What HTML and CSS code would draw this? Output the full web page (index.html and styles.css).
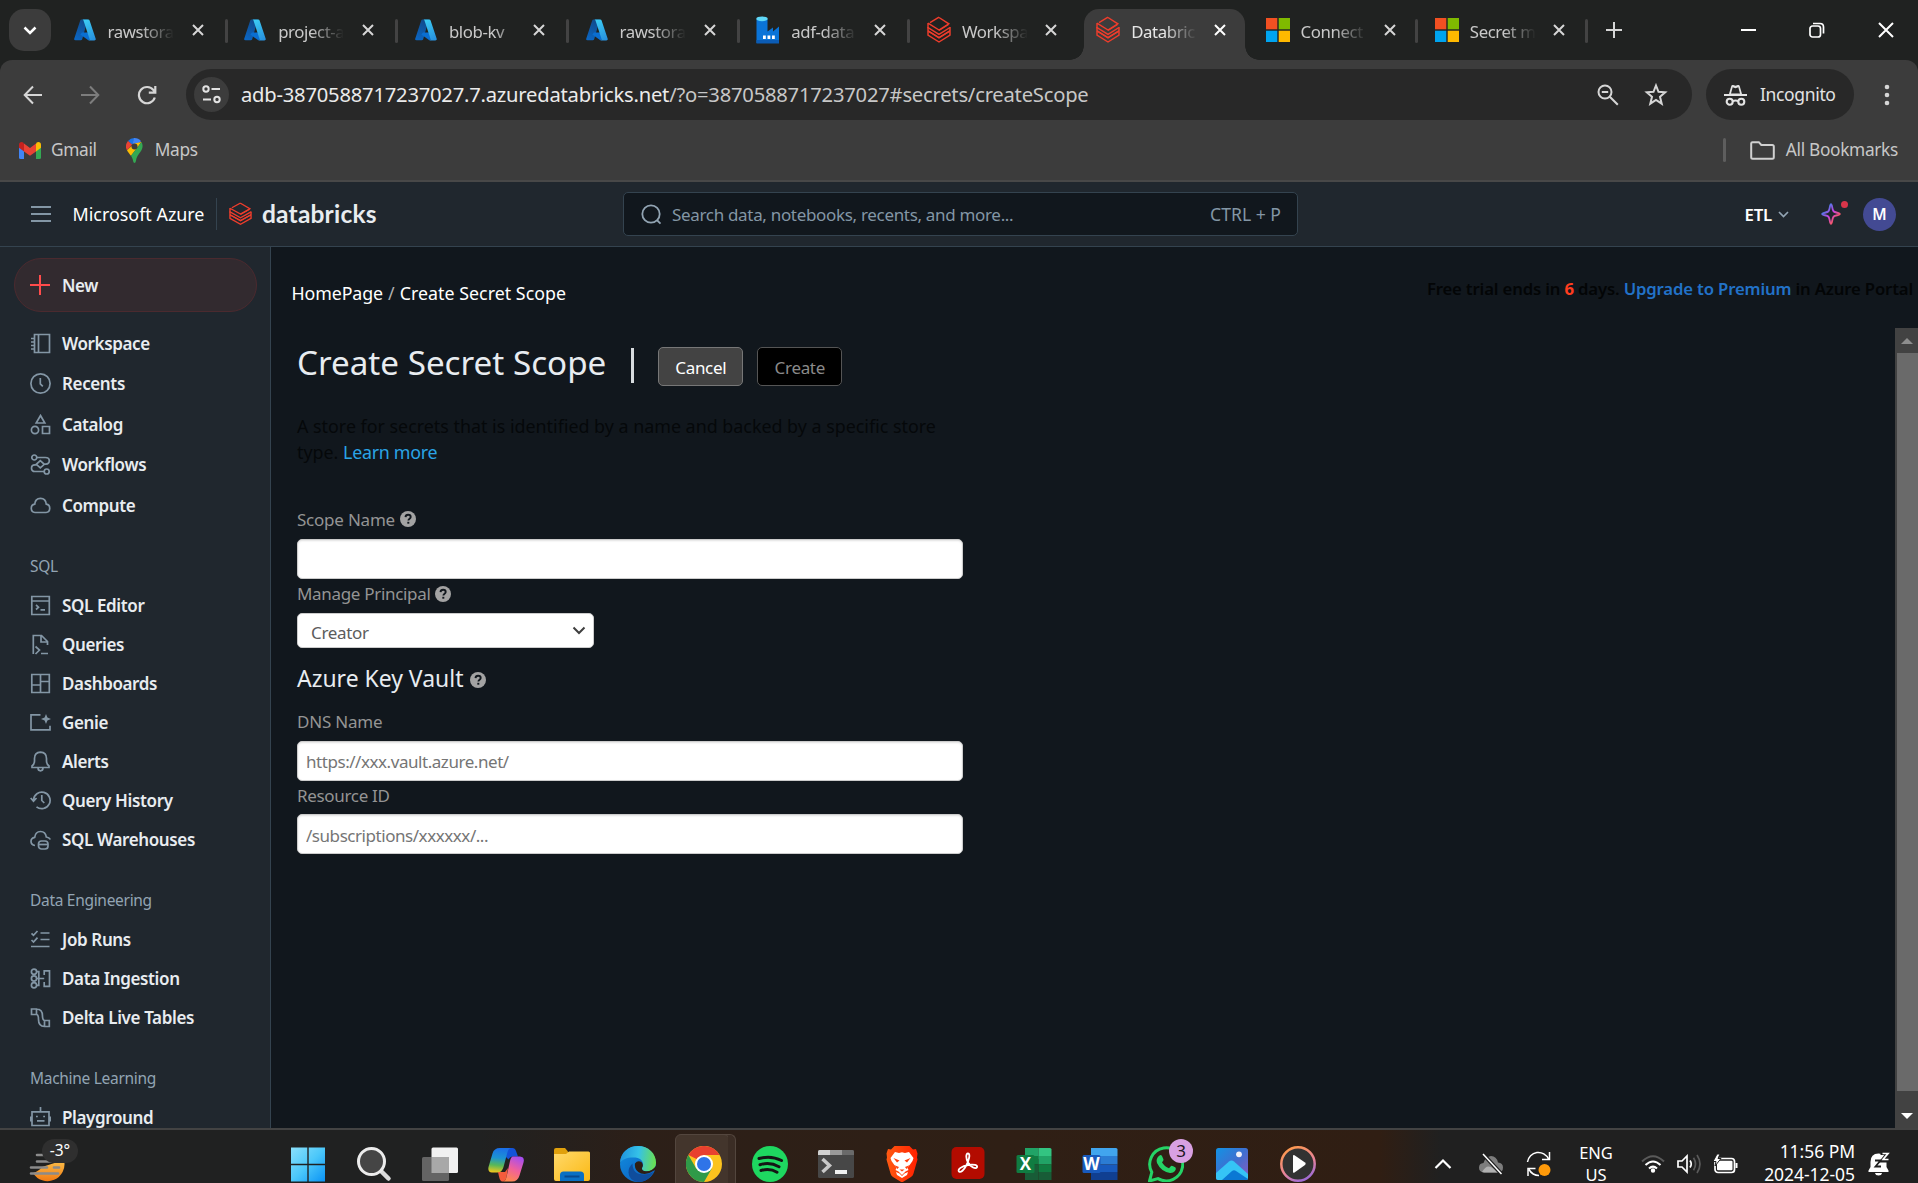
FILE: index.html
```html
<!DOCTYPE html>
<html lang="en">
<head>
<meta charset="utf-8">
<title>Databricks</title>
<link rel="stylesheet" href="styles.css">
</head>
<body>
<svg class="defs" aria-hidden="true">
  <defs>
    <linearGradient id="azL" x1="0.6" y1="0" x2="0.3" y2="1"><stop offset="0" stop-color="#114a8b"/><stop offset="1" stop-color="#0b66c2"/></linearGradient>
    <linearGradient id="azR" x1="0.3" y1="0" x2="0.7" y2="1"><stop offset="0" stop-color="#3ccbf4"/><stop offset="1" stop-color="#2892df"/></linearGradient>
    <linearGradient id="spark" x1="0" y1="0" x2="1" y2="1"><stop offset="0.2" stop-color="#4a7bea"/><stop offset="0.5" stop-color="#ca42e0"/><stop offset="0.85" stop-color="#ff5f46"/></linearGradient>
    <linearGradient id="win" x1="0" y1="0" x2="1" y2="1"><stop offset="0" stop-color="#8be0fb"/><stop offset="0.5" stop-color="#4cc8fa"/><stop offset="1" stop-color="#0a93f5"/></linearGradient>
    <linearGradient id="folderG" x1="0" y1="0" x2="1" y2="1"><stop offset="0" stop-color="#ffd96b"/><stop offset="1" stop-color="#fbb914"/></linearGradient>
    <linearGradient id="copA" x1="0.4" y1="0" x2="0.3" y2="1"><stop offset="0" stop-color="#1b6fe8"/><stop offset="0.4" stop-color="#1c93d2"/><stop offset="0.7" stop-color="#58b859"/><stop offset="1" stop-color="#f3c81c"/></linearGradient>
    <linearGradient id="copB" x1="0.7" y1="0" x2="0.3" y2="1"><stop offset="0" stop-color="#a64df0"/><stop offset="0.5" stop-color="#f0609c"/><stop offset="1" stop-color="#ff8a4a"/></linearGradient>
    <linearGradient id="edgeA" x1="0" y1="0.4" x2="1" y2="0.5"><stop offset="0" stop-color="#1f93dd"/><stop offset="0.5" stop-color="#35c1e8"/><stop offset="1" stop-color="#6be04f"/></linearGradient>
    <linearGradient id="edgeB" x1="0" y1="0" x2="0.8" y2="1"><stop offset="0" stop-color="#1390e0"/><stop offset="1" stop-color="#0a5fc0"/></linearGradient>
    <linearGradient id="photo" x1="0" y1="0" x2="1" y2="1"><stop offset="0" stop-color="#1293e4"/><stop offset="0.5" stop-color="#3f6fd0"/><stop offset="1" stop-color="#8a5ac0"/></linearGradient>
    <linearGradient id="ring" x1="0.2" y1="0" x2="0.7" y2="1"><stop offset="0" stop-color="#ff9a4a"/><stop offset="0.6" stop-color="#e8839a"/><stop offset="1" stop-color="#9a6ad8"/></linearGradient>
    <linearGradient id="sun" x1="0" y1="0" x2="0" y2="1"><stop offset="0" stop-color="#fbc14b"/><stop offset="1" stop-color="#f07a14"/></linearGradient>
    <linearGradient id="brave" x1="0" y1="0" x2="1" y2="0"><stop offset="0" stop-color="#ff5a12"/><stop offset="1" stop-color="#ff2000"/></linearGradient>
  </defs>
  <symbol id="azure" viewBox="0 0 22 22" preserveAspectRatio="none"><path d="M7.6.6h6.2L8.2 20.2a1.6 1.6 0 0 1-1.5 1.1H1.6A1.4 1.4 0 0 1 .3 19.4L6.2 1.6Q6.6.6 7.6.6Z" fill="url(#azL)"/><path d="M8 13.6h8l.7 6.4-2.4 1.3L6.3 15.5Z" fill="#0a6fd2"/><path d="M8.2.6h6a1.5 1.5 0 0 1 1.4 1l6 17.9a1.4 1.4 0 0 1-1.3 1.9h-6.2a1.4 1.4 0 0 0 1.300-1.900L9.500 1.600A1.500 1.500 0 0 0 8.200.6Z" fill="url(#azR)"/></symbol>
  <symbol id="bricks" viewBox="0 0 24 28" preserveAspectRatio="none"><g fill="none" stroke="#ee3d2c" stroke-width="1.45" stroke-linejoin="miter"><path d="M12 1.500 21.800 7.800 12 14 1 7.200M3 6.700 12 1.200M1 7v4.500L12 18.300l11-6.800"/><path d="M23 11v3.800L12 21.500 1 14.800M1 11v8L12 26l11-7v-4.500"/><path d="M12 14.500l9.500-6M1 14.800l11 7 11-7"/></g></symbol>
  <symbol id="ms" viewBox="0 0 24 24"><path fill="#f25022" d="M0 0h11.300v11.300H0z"/><path fill="#7fba00" d="M12.700 0H24v11.300H12.700z"/><path fill="#00a4ef" d="M0 12.700h11.300V24H0z"/><path fill="#ffb900" d="M12.700 12.700H24V24H12.700z"/></symbol>
  <symbol id="x" viewBox="0 0 12 12"><path d="M1 1l10 10M11 1 1 11" stroke="currentColor" stroke-width="2" fill="none"/></symbol>
  <symbol id="help" viewBox="0 0 16 16"><circle cx="8" cy="8" r="8" fill="#a3a3a3"/><path d="M5.500 6.100C5.600 4.500 6.700 3.700 8.100 3.700c1.500 0 2.600.9 2.600 2.200 0 1.800-2.300 1.700-2.300 3.600" fill="none" stroke="#11171d" stroke-width="1.900"/><path d="M7.300 10.800h2v1.900h-2z" fill="#11171d"/></symbol>
</svg>

<div class="screen">
  <!-- Tab strip -->
  <header class="tabstrip">
    <button class="tabsearch"><svg width="14" height="9" viewBox="0 0 14 9"><path d="M1.500 1.500 7 7l5.500-5.500" fill="none" stroke="#fff" stroke-width="2.500"/></svg></button>
    <div class="tab"><svg class="fav"><use href="#azure"/></svg><span class="tabtext">rawstora</span><svg class="tabx"><use href="#x"/></svg></div>
    <div class="tab"><svg class="fav"><use href="#azure"/></svg><span class="tabtext">project-a</span><svg class="tabx"><use href="#x"/></svg></div>
    <div class="tab"><svg class="fav"><use href="#azure"/></svg><span class="tabtext light">blob-kv</span><svg class="tabx"><use href="#x"/></svg></div>
    <div class="tab"><svg class="fav"><use href="#azure"/></svg><span class="tabtext">rawstora</span><svg class="tabx"><use href="#x"/></svg></div>
    <div class="tab"><svg class="fav tall" viewBox="0 0 24 28" preserveAspectRatio="none"><path d="M.5 3h11v12.500l5.500-4v4l6-5V27H.5z" fill="#0a74d8"/><path d="M.5 24h22.500v3.500H.5z" fill="#0b5cb5"/><ellipse cx="6" cy="2.800" rx="5.700" ry="2.400" fill="#5fd8f8"/><path d="M7 19.500h2.800V23H7zm4.500 0h2.800V23h-2.800zm4.500 0h2.800V23H16z" fill="#fff"/></svg><span class="tabtext">adf-data</span><svg class="tabx"><use href="#x"/></svg></div>
    <div class="tab narrow last"><svg class="fav tall"><use href="#bricks"/></svg><span class="tabtext">Workspa</span><svg class="tabx"><use href="#x"/></svg></div>
    <div class="tab narrow last active"><svg class="fav tall"><use href="#bricks"/></svg><span class="tabtext">Databric</span><svg class="tabx"><use href="#x"/></svg></div>
    <div class="tab narrow"><svg class="fav tall"><use href="#ms"/></svg><span class="tabtext">Connect</span><svg class="tabx"><use href="#x"/></svg></div>
    <div class="tab narrow"><svg class="fav tall"><use href="#ms"/></svg><span class="tabtext">Secret m</span><svg class="tabx"><use href="#x"/></svg></div>
    <svg class="newtab" viewBox="0 0 16 16"><path d="M8 0v16M0 8h16" stroke="#d6d6d6" stroke-width="2"/></svg>
    <div class="winctl">
      <svg width="15" height="16" viewBox="0 0 15 16"><path d="M0 8h15" stroke="#fff" stroke-width="2"/></svg>
      <svg width="16" height="16" viewBox="0 0 16 16" fill="none" stroke="#fff" stroke-width="1.700"><rect x="1" y="4" width="10.500" height="11" rx="2.500"/><path d="M4 1.500h7q3.500 0 3.500 3.500v6.500"/></svg>
      <svg width="16" height="16" viewBox="0 0 16 16"><path d="M1 1l14 14M15 1 1 15" stroke="#fff" stroke-width="2"/></svg>
    </div>
  </header>

  <!-- Address bar and bookmarks -->
  <section class="toolbar">
    <div class="navrow">
      <div class="navbtns">
        <svg width="20" height="20" viewBox="0 0 20 20" fill="none" stroke="#d6d6d6" stroke-width="2"><path d="M19 10H2M10 1.500 1.700 10l8.300 8.500"/></svg>
        <svg width="20" height="20" viewBox="0 0 20 20" fill="none" stroke="#7d7d7d" stroke-width="2"><path d="M1 10h17M10 1.500l8.300 8.500-8.300 8.500"/></svg>
        <svg width="20" height="20" viewBox="0 0 20 20" fill="none" stroke="#d6d6d6" stroke-width="2.200"><path d="M17.800 12.500A8.100 8.100 0 1 1 16.500 5.200L18 7M18.300 1v6.600h-6.500"/></svg>
      </div>
      <div class="omnibox">
        <span class="siteinfo"><svg width="19" height="19" viewBox="0 0 19 19" fill="none" stroke="#e3e3e3" stroke-width="2"><circle cx="4" cy="4" r="2.700"/><path d="M9.500 4H18M1 14.500h8"/><circle cx="15" cy="14.500" r="2.700"/></svg></span>
        <span class="url">adb-3870588717237027.7.azuredatabricks.net<span class="urlpath">/?o=3870588717237027#secrets/createScope</span></span>
        <svg width="22" height="22" viewBox="0 0 22 22" fill="none" stroke="#d6d6d6" stroke-width="2"><circle cx="8" cy="8" r="6.500"/><path d="M4.800 8h6.400M12.800 12.800l8 8"/></svg>
        <svg class="star" width="24" height="24" viewBox="0 0 24 24" fill="none" stroke="#d6d6d6" stroke-width="2"><path d="M12 2.500l2.500 6.300 6.700.5-5.200 4.500 1.700 6.900-5.700-3.800-5.700 3.800 1.700-6.900-5.200-4.500 6.700-.5z"/></svg>
      </div>
      <div class="incog"><svg width="23" height="22" viewBox="0 0 23 22"><path d="M5 10 7.300 2Q7.700.5 9.200 1L11.500 1.700 13.800 1q1.500-.5 1.900 1L18 10h5v2H0v-2zM8.700 3.300 7 9.500h9L14.300 3.300l-2.800 1z" fill="#e3e3e3"/><g fill="none" stroke="#e3e3e3" stroke-width="2.100"><circle cx="5.700" cy="17.700" r="3"/><circle cx="17.300" cy="17.700" r="3"/><path d="M8.700 17.300q2.800-1.500 5.600 0"/></g></svg><span>Incognito</span></div>
      <svg class="dots" viewBox="0 0 6 22" fill="#d6d6d6"><circle cx="3" cy="3" r="2.300"/><circle cx="3" cy="11" r="2.300"/><circle cx="3" cy="19" r="2.300"/></svg>
    </div>
    <div class="bookmarks">
      <svg width="22" height="17" viewBox="0 0 22 17"><path d="M0 3v12.500A1.500 1.500 0 0 0 1.500 17H5V5z" fill="#4285f4"/><path d="M22 3v12.500a1.500 1.500 0 0 1-1.500 1.500H17V5z" fill="#34a853"/><path d="M17 2v7.500l5-3.800V2.500C22 .2 19.500-.700 17.700.6z" fill="#fbbc04"/><path d="M0 2.500v3.200l5 3.800V2L4.300.6C2.500-.7 0 .2 0 2.500z" fill="#c5221f"/><path d="M5 1.600v7.900l6 4.300 6-4.300V1.600L11 6z" fill="#ea4335"/></svg>
      <span class="bm">Gmail</span>
      <svg class="pin" width="17" height="25" viewBox="0 0 17 25"><path d="M8.500 0A8.400 8.400 0 0 0 2 3l4.300 3.700z" fill="#1a73e8"/><path d="M2 3A8.400 8.400 0 0 0 1 12.300L6.300 6.700z" fill="#ea4335"/><path d="M8.500 0C11 0 13.500 1.200 15 3.200L8.500 8.500 6.300 6.700 8 0z" fill="#4285f4"/><path d="M1 12.300c1 2 2.600 3.700 4 5.500L15.500 4 8.500 5.500z" fill="#fbbc04"/><path d="M15.500 4c2 3.500 1 7-1 9.700-2.400 3-4 5.300-4.600 9.300-.4 2.500-2.400 2.500-2.800 0C6.800 21 6 19.300 5 17.800z" fill="#34a853"/><circle cx="8.500" cy="8.500" r="3" fill="#3c3c3c"/></svg>
      <span class="bm">Maps</span>
      <span class="bmsep"></span>
      <svg width="25" height="19" viewBox="0 0 25 19" fill="none" stroke="#d0d0d0" stroke-width="2"><path d="M1.200 2.500q0-1.300 1.300-1.300h6.300l2.500 2.800h11q1.500 0 1.500 1.500v10.800q0 1.500-1.500 1.500H2.700q-1.500 0-1.500-1.500z"/></svg>
      <span class="bm all">All Bookmarks</span>
    </div>
  </section>

  <!-- Databricks header -->
  <header class="dbhead">
    <svg class="burger" width="20" height="16" viewBox="0 0 20 16"><path d="M0 1h20M0 8h20M0 15h20" stroke="#8396a5" stroke-width="1.800"/></svg>
    <span class="msaz">Microsoft Azure</span>
    <svg class="dblogo"><use href="#bricks"/></svg>
    <span class="dbname">databricks</span>
    <div class="search"><svg width="21" height="21" viewBox="0 0 21 21" fill="none" stroke="#92a4b3" stroke-width="1.800"><circle cx="10" cy="10" r="8.700"/><path d="M15.800 16l3.700 3.700"/></svg><span class="ph">Search data, notebooks, recents, and more...</span><span class="kbd">CTRL + P</span></div>
    <div class="hright">
      <span class="etl">ETL</span>
      <svg width="11" height="7" viewBox="0 0 11 7"><path d="M1 1l4.500 4.500L10 1" fill="none" stroke="#92a4b3" stroke-width="1.700"/></svg>
      <span class="sparkle"><svg width="20" height="22" viewBox="0 0 20 20" preserveAspectRatio="none"><path d="M10 1.200c1.300 0 1 4.800 2.500 6.300s6.300 1.200 6.300 2.500-4.800 1-6.300 2.500-1.200 6.300-2.500 6.300-1-4.800-2.500-6.300S1.200 11.300 1.200 10s4.800-1 6.300-2.500S8.700 1.200 10 1.200z" fill="none" stroke="url(#spark)" stroke-width="1.800"/></svg><i class="reddot"></i></span>
      <span class="avatar">M</span>
    </div>
  </header>

  <div class="app">
    <nav class="side">
      <a class="new"><svg width="20" height="20" viewBox="0 0 20 20"><path d="M10 0v20M0 10h20" stroke="#ff4b4b" stroke-width="2"/></svg>New</a>
      <ul class="group main">
        <li><svg viewBox="0 0 21 21"><path d="M4.500 1.500h15v18h-15zM8.500 1.500v18M1 5.500h3.500M1 9h3.500M1 12.500h3.500M1 16h3.500"/></svg>Workspace</li>
        <li><svg viewBox="0 0 21 21"><circle cx="10.500" cy="10.500" r="9.600"/><path d="M10.300 5v5.800l2.500 2.500"/></svg>Recents</li>
        <li><svg viewBox="0 0 21 21"><path d="M10.500 1.500 14.800 9H6.200zM12.500 12.500h7v7h-7z"/><circle cx="5" cy="16" r="3.600"/></svg>Catalog</li>
        <li><svg viewBox="0 0 21 21"><circle cx="4.300" cy="3.500" r="2.500"/><circle cx="16.700" cy="17.500" r="2.500"/><path d="M6.800 3.500h8.500q4 0 4 3.300t-3.500 3.300h-1.500M14.200 17.500H5q-3.500 0-3.500-3.300t3.500-3.300h1.500M10.300 6.700l4 3.600-4 3.600-4-3.600z"/></svg>Workflows</li>
        <li><svg viewBox="0 0 21 21"><path d="M5 17.500a4.200 4.200 0 0 1-.3-8.300C5 5.700 7.300 3.300 10.500 3.300s5.500 2.400 5.800 5.900a4.200 4.200 0 0 1-.3 8.300z"/></svg>Compute</li>
      </ul>
      <ul class="group">
        <li class="label">SQL</li>
        <li><svg viewBox="0 0 21 21"><path d="M1.800 1.500h17.500v18H1.800zM1.800 6h17.500M6 10l2.500 2.200L6 14.500M10.500 14.800h4.500"/></svg>SQL Editor</li>
        <li><svg viewBox="0 0 21 21"><path d="M3.300 20V1.500h8.200l6 6V11M11 1.500V8h6.500M5.500 12.500l4 3.500-4 4M11 19.500h7"/></svg>Queries</li>
        <li><svg viewBox="0 0 21 21"><path d="M1.800 1.500h17.500v18H1.800zM10.500 1.500v18M1.800 12h8.700M10.500 8.500h8.800"/></svg>Dashboards</li>
        <li><svg viewBox="0 0 21 21"><path d="M10.500 2.800H1v15h19v-4"/><path class="fill" d="M16 2l1.400 3.600L21 7l-3.600 1.400L16 12l-1.400-3.600L11 7l3.600-1.400z"/></svg>Genie</li>
        <li><svg viewBox="0 0 21 21"><path d="M4.500 10V7.500q0-6 6-6.300 6 .3 6 6.300V10q0 3 2.500 5v1.500H2V15q2.500-2 2.500-5zM8 16.800q0 3 2.500 3t2.500-3"/></svg>Alerts</li>
        <li><svg viewBox="0 0 21 21"><path d="M3.500 10A8.300 8.300 0 1 1 6.500 16.800M.7 8l2.800 3.300L6.500 8M11.800 5v5.500l2.500 2.500"/></svg>Query History</li>
        <li><svg viewBox="0 0 21 21"><path d="M5 16.500q-4-.5-4-4.200Q1 9 4.700 8.300q.8-5.800 5.800-5.800T16.300 8q3 .3 4 2.500"/><rect x="8.500" y="12" width="9.500" height="8" rx="3"/><path d="M8.500 15.500h9.500"/></svg>SQL Warehouses</li>
      </ul>
      <ul class="group">
        <li class="label">Data Engineering</li>
        <li><svg viewBox="0 0 21 21"><path d="M10.500 4h9M10.500 10.500h9M1 17.500h18.500M1.500 4.300l2 2L7.500 2M1.500 11l2 2 4-4.300"/></svg>Job Runs</li>
        <li><svg viewBox="0 0 21 21"><circle cx="4" cy="3.700" r="2.600"/><circle cx="4" cy="10.500" r="2.600"/><circle cx="4" cy="17.300" r="2.600"/><path d="M6.500 3.700h2.300v13.600H6.500M6.700 10.500h7.500M14.200 7V2.800h5.300v15.500h-5.300V14"/></svg>Data Ingestion</li>
        <li><svg viewBox="0 0 21 21"><path d="M1.500 2h5v5.500h-5zM6.500 2q6 0 6 7 0 4.500 2.500 4.500M6.500 7.500q2 0 2 5 0 7 6 7M14.500 13.500h4.800v6h-4.800z"/></svg>Delta Live Tables</li>
      </ul>
      <ul class="group">
        <li class="label">Machine Learning</li>
        <li><svg viewBox="0 0 21 21"><path d="M2 4.800h17v13.700H2zM10.500 0v4.800M.5 9.500v5M20.500 9.500v5M7 13.800h7.500M6 9.500h1.800M13.200 9.500H15"/></svg>Playground</li>
      </ul>
    </nav>

    <main class="content">
      <div class="topline">
        <div class="crumbs"><a>HomePage</a><span class="slash">/</span><a>Create Secret Scope</a></div>
        <div class="trial">Free trial ends in <b>6</b> days. <a>Upgrade to Premium</a> in Azure Portal</div>
      </div>
      <div class="scroll">
        <div class="form">
          <div class="titlerow"><h1>Create Secret Scope</h1><i class="vbar"></i><button class="btn cancel">Cancel</button><button class="btn create" disabled>Create</button></div>
          <p class="desc">A store for secrets that is identified by a name and backed by a specific store type. <a>Learn more</a></p>
          <label class="l1">Scope Name<svg class="help"><use href="#help"/></svg></label>
          <input type="text">
          <label class="l2">Manage Principal<svg class="help"><use href="#help"/></svg></label>
          <div class="select">Creator<svg width="14" height="9" viewBox="0 0 14 9"><path d="M1.500 1.500 7 7l5.500-5.500" fill="none" stroke="#3f3f3f" stroke-width="2"/></svg></div>
          <h2>Azure Key Vault<svg class="help"><use href="#help"/></svg></h2>
          <label class="l3">DNS Name</label>
          <input type="text" placeholder="https://xxx.vault.azure.net/">
          <label class="l4">Resource ID</label>
          <input type="text" class="res" placeholder="/subscriptions/xxxxxx/...">
        </div>
        <div class="sbar"><span class="sbtn"><svg width="12" height="6"><path d="M6 0l6 6H0z" fill="#8d8d8d"/></svg></span><span class="thumb"></span><span class="sbtn down"><svg width="12" height="6"><path d="M0 0h12L6 6z" fill="#fff"/></svg></span></div>
      </div>
    </main>
  </div>

  <!-- Windows taskbar -->
  <footer class="taskbar">
    <div class="weather"><svg width="36" height="30" viewBox="0 0 36 30"><path d="M35 8a17 17 0 0 1-31 13q6-2 9-6z" fill="url(#sun)"/><path d="M8 3h10M8 9.500h14M2 15.500h16M25 15.500h5M2 21.500h27" stroke="#8b8b8b" stroke-width="2.600" stroke-linecap="round"/></svg><span class="temp">-3°</span></div>
    <div class="apps">
      <div><svg viewBox="0 0 36 36"><path d="M1 1.500h16.300v16.300H1zM18.700 1.500H35v16.300H18.700zM1 19.200h16.300v16.300H1zM18.700 19.200H35v16.300H18.700z" fill="url(#win)"/></svg></div>
      <div><svg viewBox="0 0 36 36"><path d="M24 24l8.500 8.500" stroke="#dcdcdc" stroke-width="4.500" stroke-linecap="round"/><circle cx="15.500" cy="15.500" r="13" fill="#454545" stroke="#ececec" stroke-width="3"/></svg></div>
      <div><svg viewBox="0 0 36 36"><rect x="9.500" y="1.500" width="26.500" height="25.500" rx="1.500" fill="#f1f1f1"/><rect y="11" width="27" height="24" rx="1.500" fill="#646464"/><path d="M9.500 11H27v16H9.500z" fill="#a8a8a8"/></svg></div>
      <div><svg viewBox="0 0 36 36"><path d="M19 2h5.500q2.500 0 3.500 3l2 5.500h-5q-3 0-4.500 3L17 10z" fill="#1453d8"/><path d="M12 2h11q-2.500.5-3.500 4l-4 15q-1.500 5.500-6 5.500H4Q-.500 26.500.5 21L4.500 7.500Q6 2 12 2z" fill="url(#copA)"/><path d="M10 26h7l3-4-1.500 9q-1 4.500-4 4.500-2.500 0-3.500-5z" fill="#f45c3c"/><path d="M25 10.500h7q5 .5 3.500 6l-4 13q-1.700 6-7.500 6H14.500q3 0 4-4.500l3.500-16q1-4.500 3-4.500z" fill="url(#copB)"/></svg></div>
      <div><svg viewBox="0 0 36 36"><path d="M0 4q0-2 2-2h9l3 3.500V9H0z" fill="#e0a00c"/><path d="M0 8h12l3-2.500h19.500Q36 5.500 36 7v26q0 2-2 2H2q-2 0-2-2z" fill="url(#folderG)"/><path d="M6 35v-6q0-3.500 3.500-3.500h17Q30 25.500 30 29v6z" fill="#0a70c4"/><path d="M10.500 30.500h15" stroke="#08498e" stroke-width="2"/></svg></div>
      <div><svg viewBox="0 0 36 36"><circle cx="18" cy="18" r="18" fill="url(#edgeB)"/><path d="M0 17C.5 6 8.500 0 18 0c10.500 0 18 7.500 18 16.500 0 6-4.500 8.800-9 8.800-4 0-6-1.600-5-3.300 3-4.500-.5-10-6.500-10.500C8 11 2 13 0 17z" fill="url(#edgeA)"/><path d="M12.500 17.500q0 11 11 11 6 0 10-2.500Q28 36 18 36q-9-1.500-9.500-9.500 0-5.500 4-9z" fill="#0f4d9c"/><path d="M15 17.500q-1 7 6 10 7 1.500 12-2.500l3.500-1.500L36 20q-4 5.500-10 5.300-4.500-.3-4-3.300 2-3-.5-6-4-2-6.500 1.500z" fill="#2e1e14"/></svg></div>
      <div class="cur"><svg viewBox="0 0 36 36"><circle cx="18" cy="18" r="18" fill="#fcc31e"/><path d="M2.400 9A18 18 0 0 1 33.600 9H18L10.500 13z" fill="#e8402f"/><path d="M2.400 9A18 18 0 0 0 18 36l7.800-13.500L18 26l-7.800-3.500z" fill="#2f9a48"/><circle cx="18" cy="18" r="9" fill="#fff"/><circle cx="18" cy="18" r="7" fill="#2f74e8"/></svg></div>
      <div><svg viewBox="0 0 36 36"><circle cx="18" cy="18" r="18" fill="#1ed760"/><path d="M7 12.500q12-3.500 22.500 2M8 18.700q10-3 19 2M9 24.500q9-2.500 16 1.700" fill="none" stroke="#151515" stroke-width="3" stroke-linecap="round"/></svg></div>
      <div><svg viewBox="0 0 36 36"><rect y="4" width="36" height="28" rx="1.500" fill="#474747"/><path d="M0 9V5.500Q0 4 1.500 4H12v5z" fill="#d0d0d0"/><path d="M12 4h12v5H12z" fill="#9a9a9a"/><path d="M24 4h10.500Q36 4 36 5.500V9H24z" fill="#6a6a6a"/><path d="M4.500 13l7 6.500-7 6.500" fill="none" stroke="#c8c8c8" stroke-width="3.500"/><path d="M17 24h12v4H17z" fill="#f0f0f0"/></svg></div>
      <div><svg viewBox="0 0 36 36"><path d="M10.500 0h15L29 3.500l3-.5 1.500 4.500-.5 4 .5 2-4 14q-.5 2-2.500 3.500L18 36.500 9 31q-2-1.500-2.500-3.500l-4-14 .5-2-.5-4L4 3l3 .5z" fill="url(#brave)"/><path d="M11 6l4 1 3-.7 3 .7 4-1 4.500 6-1 3-5 7 1 2-3 1.500-3.500 3.500-3.500-3.500-3-1.500 1-2-5-7-1-3z" fill="#fff"/><path d="M9.500 12l6 2.500-2.500 2zM26.500 12l-6 2.500 2.500 2zM10 19l5 2-1.500 2zM26 19l-5 2 1.500 2zM15.500 23.500h5L18 25.500z" fill="#ff4010"/><path d="M12 26l3.500 1.500L18 30l2.500-2.500L24 26l-1 3-5 3-5-3z" fill="#fff"/></svg></div>
      <div><svg viewBox="0 0 36 36"><rect x="1.500" y="1" width="33" height="32" rx="5" fill="#b30b00"/><path d="M9 25.500c-2-2 3-5.500 9-6.500 6-1.200 10 .3 9 2.300-1.500 2.500-7-1-9-4.800-2-3.500-2.500-9 0-9 3 0 .5 8-2 12.500-2 3.700-5.200 7-7 5.500z" fill="none" stroke="#fff" stroke-width="1.800"/></svg></div>
      <div><svg viewBox="0 0 36 36"><path d="M9 2h13.500v11H9z" fill="#21a366"/><path d="M22.500 2H34q1.500 0 1.500 1.500V10h-13z" fill="#33c481"/><path d="M9 10h13.500v8.500H9z" fill="#107c41"/><path d="M22.500 10h13v8.500h-13z" fill="#21a366"/><path d="M9 18.500h13.500V34H9z" fill="#185c37"/><path d="M22.500 18.500h13v7.500h-13z" fill="#107c41"/><path d="M22.500 26h13v8h-13z" fill="#185c37"/><rect x=".5" y="9" width="18" height="18" rx="1.500" fill="#107c41"/><text x="9.500" y="23.500" class="glyph">X</text></svg></div>
      <div><svg viewBox="0 0 36 36"><path d="M9 2h25q1.500 0 1.500 1.500V10H9z" fill="#41a5ee"/><path d="M9 10h26.500v8.500H9z" fill="#2b7cd3"/><path d="M9 18.500h26.500V26H9z" fill="#185abd"/><path d="M9 26h26.500v8H9z" fill="#103f91"/><rect x=".5" y="9" width="18" height="18" rx="1.500" fill="#185abd"/><text x="9.500" y="23.500" class="glyph">W</text></svg></div>
      <div class="wa"><svg viewBox="0 0 36 36"><path d="M1.500 35l2.300-8.700A16.500 16.500 0 1 1 10 32.600z" fill="none" stroke="#25d366" stroke-width="3"/><path d="M11.500 9.500q1.500-1 2.500.5l1.500 3.500q.2 1-1.500 2.800 2.500 4.500 7 6l2-2.300q1-.7 4.500 1.500 1 1-.5 3.500-2 2.300-5 2-9-1.500-13-10-1.500-4.500 2.500-7.500z" fill="#25d366"/></svg><span class="badge">3</span></div>
      <div><svg viewBox="0 0 36 36"><rect x="2" y="2" width="32" height="32" rx="2.500" fill="url(#photo)"/><path d="M2 27l13-11.500q2.500-2 5 0L34 28v4q0 2-2 2H4q-2 0-2-2z" fill="#35c4f6"/><path d="M8 34l10-9q2-1.700 4 0l12 8q-.5 1-2 1z" fill="#0a78d4"/><circle cx="25" cy="8.300" r="2.900" fill="#f0f0f8"/></svg></div>
      <div><svg viewBox="0 0 36 36"><circle cx="18" cy="18" r="16.700" fill="#323232" stroke="url(#ring)" stroke-width="2.500"/><path d="M13 10q0-1.500 1.500-.8L25 16.500q1.500 1.300 0 2.600L14.500 26.500Q13 27.300 13 26z" fill="#fff"/></svg></div>
    </div>
    <div class="tray">
      <span class="slot"><svg width="18" height="12" viewBox="0 0 18 12"><path d="M1.500 10 9 2.500l7.500 7.500" fill="none" stroke="#fff" stroke-width="2.200"/></svg></span>
      <span class="slot"><svg width="26" height="22" viewBox="0 0 26 22"><path d="M6 19.500q-5-.5-5-4.800T5.500 10Q7.500 3.500 13 3q5.500 0 7 6.500 5 .5 5 5t-4.500 5z" fill="#7d7d7d"/><path d="M4 19q4-7.500 9-5l9 5.500H6z" fill="#b0b0b0"/><path d="M5 1l18.500 20" stroke="#202020" stroke-width="4"/><path d="M5 1l18.500 20" stroke="#fff" stroke-width="1.500"/></svg></span>
      <span class="slot"><svg width="26" height="26" viewBox="0 0 26 26"><g fill="none" stroke="#fff" stroke-width="1.500"><path d="M1.500 11a11 11 0 0 1 21-3M23.500 1v7.500H16M2 25v-7.500h7.500M3 18.500q3.500 6 10 6"/></g><circle cx="18.500" cy="19" r="6" fill="#ff9a0a"/></svg></span>
      <span class="lang">ENG<br>US</span>
      <span class="status">
        <svg width="24" height="18" viewBox="0 0 24 18" fill="none" stroke="#fff" stroke-width="2"><path d="M1 6.500q11-10.500 22 0" stroke="#5a5a5a"/><path d="M4.500 10q7.500-7 15 0M8 13.500q4-3.700 8 0"/><circle cx="12" cy="15.500" r="1.200" fill="#fff"/></svg>
        <svg width="25" height="20" viewBox="0 0 25 20" fill="none" stroke="#fff" stroke-width="1.700"><path d="M1 7h4l5-5v16l-5-5H1zM13 6.500q2.500 3.500 0 7"/><path d="M16.500 3.800q4 6.200 0 12.400M20 1q6 9 0 18" stroke="#5a5a5a"/></svg>
        <svg width="25" height="20" viewBox="0 0 25 20"><rect x="2" y="4.500" width="19.500" height="14" rx="3" fill="none" stroke="#fff" stroke-width="1.700"/><rect x="4" y="6.700" width="15.500" height="9.600" rx="1" fill="#fff"/><path d="M22.500 9h2v5h-2z" fill="#fff"/><path d="M4 0 0 7.500h3L2 12l6-7.500H5L7 0z" fill="#fff" stroke="#202020" stroke-width="1"/></svg>
      </span>
      <span class="clock">11:56 PM<br>2024-12-05</span>
      <svg class="bell" width="22" height="24" viewBox="0 0 22 24"><path d="M2.500 10q0-8.500 8-8.500t8 8.500v5l2 3.500v1.500H.5v-1.500L2.500 15z" fill="#fff"/><path d="M7 21h7q-.5 2.500-3.500 2.500T7 21z" fill="#fff"/><path d="M12.500 1h8l-6 7.500h7.500" fill="none" stroke="#202020" stroke-width="4"/><path d="M14.500 1.500h5.500l-5 6h5.500" fill="none" stroke="#fff" stroke-width="1.700"/><path d="M7 8.500h5.500l-5 6h5.500" fill="none" stroke="#202020" stroke-width="1.800"/></svg>
    </div>
  </footer>
</div>
</body>
</html>
```
FILE: styles.css
```css
* { box-sizing: border-box; }
body { margin: 0; background: #202221; font-family: "Noto Sans", sans-serif; font-size: 17px; color: #e8ecf0; }
svg { display: block; flex: none; }
.defs { position: absolute; width: 0; height: 0; }
ul { list-style: none; margin: 0; padding: 0; }
button, input { font-family: inherit; }
.screen { width: 1918px; height: 1183px; overflow: hidden; display: flex; flex-direction: column; }

/* Tab strip */
.tabstrip { height: 60px; flex: none; display: flex; align-items: center; padding-left: 9px; background: #202221; }
.tabsearch { width: 42px; height: 42px; margin-right: 6px; padding: 0; border: 0; border-radius: 15px; background: #3c3c3c; display: flex; align-items: center; justify-content: center; }
.tab { position: relative; width: 170.7px; height: 60px; flex: none; display: flex; align-items: center; padding-left: 16.5px; color: #c9c9c9; }
.tab.narrow { width: 169.3px; }
.tab::after { content: ""; position: absolute; right: 0; top: 19px; width: 3px; height: 24px; border-radius: 2px; background: #434343; }
.tab.last::after { display: none; }
.fav { width: 22px; height: 22px; margin-right: 12px; }
.fav.tall { width: 24px; height: 28px; margin-right: 11px; }
.tabtext { width: 66px; margin-right: 18px; padding-top: 2px; font-size: 16.8px; letter-spacing: -0.4px; white-space: nowrap; overflow: hidden; -webkit-mask-image: linear-gradient(90deg, #000 50%, transparent 100%); mask-image: linear-gradient(90deg, #000 50%, transparent 100%); }
.tall + .tabtext { margin-right: 17px; }
.tabtext.light { -webkit-mask-image: linear-gradient(90deg, #000 70%, transparent 105%); mask-image: linear-gradient(90deg, #000 70%, transparent 105%); }
.tabx { width: 12px; height: 12px; color: #d6d6d6; }
.tab > * { z-index: 1; }
.tab.active { color: #e6e6e6; }
.tab.active .tabx { color: #fff; }
.tab.active::before { content: ""; position: absolute; left: 4px; top: 9px; bottom: 0; width: 161px; border-radius: 15px 15px 0 0; background: #3c3c3c; }
.tab.active::after { display: block; left: -10px; right: auto; top: 46px; width: 189px; height: 14px; border-radius: 0; background: radial-gradient(circle 14px at 0 0, transparent 13.5px, #3c3c3c 14px) 0 0 / 14px 14px no-repeat, radial-gradient(circle 14px at 100% 0, transparent 13.5px, #3c3c3c 14px) 100% 0 / 14px 14px no-repeat; }
.newtab { width: 16px; height: 16px; margin-left: 18px; }
.winctl { margin-left: auto; padding-right: 24.5px; display: flex; gap: 53px; }

/* Toolbar */
.toolbar { height: 122px; flex: none; background: #3c3c3c; border-bottom: 2px solid #484848; border-radius: 12px 12px 0 0; padding-top: 9px; }
.navrow { height: 51px; display: flex; align-items: center; }
.navbtns { width: 186px; display: flex; gap: 37px; padding-left: 23px; }
.omnibox { width: 1506px; height: 51px; border-radius: 26px; background: #282828; display: flex; align-items: center; padding: 0 24px 0 8px; }
.siteinfo { width: 35px; height: 35px; border-radius: 50%; background: #3c3c3c; display: flex; align-items: center; justify-content: center; margin-right: 12px; }
.url { flex: 1; padding-bottom: 2px; font-size: 20.2px; letter-spacing: -0.22px; color: #ebebeb; white-space: nowrap; }
.urlpath { color: #c7c7c7; }
.star { margin-left: 25px; }
.incog { width: 148px; height: 51px; margin-left: 14px; padding-left: 18px; border-radius: 26px; background: #282828; display: flex; align-items: center; gap: 13px; font-size: 17.5px; letter-spacing: -0.35px; color: #e3e3e3; }
.incog span { padding-bottom: 1px; }
.dots { width: 6px; height: 22px; margin-left: 30px; }
.bookmarks { height: 60px; display: flex; align-items: center; padding-left: 19px; color: #c7c7c7; }
.bm { font-size: 17.3px; letter-spacing: -0.32px; margin-left: 10px; padding-bottom: 2px; white-space: nowrap; }
.pin { margin-left: 29px; margin-right: 2px; }
.bmsep { width: 3px; height: 24px; margin-left: auto; margin-right: 24px; border-radius: 2px; background: #5e5e5e; }
.bm.all { margin-left: 11px; margin-right: 20px; }

/* Databricks header */
.dbhead { height: 65px; flex: none; display: flex; align-items: center; background: #20272e; border-bottom: 1px solid #34434f; }
.burger { margin-left: 31px; }
.msaz { margin-left: 21.5px; width: 144.5px; height: 32px; line-height: 33px; border-right: 1px solid #34434f; font-size: 17.9px; color: #fff; white-space: nowrap; }
.dblogo { width: 23px; height: 24px; margin-left: 12px; }
.dbname { width: 114px; margin-left: 10px; font-family: Lato, sans-serif; font-size: 24.5px; font-weight: 700; letter-spacing: 0.2px; line-height: 26px; }
.search { width: 675px; height: 44px; margin-left: 247px; border: 1px solid #34434f; border-radius: 5px; background: #11171d; display: flex; align-items: center; padding: 0 16px 0 17px; color: #8396a5; }
.ph { margin-left: 10px; flex: 1; font-size: 17px; letter-spacing: -0.32px; }
.kbd { font-size: 17.6px; }
.hright { margin-left: auto; padding-right: 22px; display: flex; align-items: center; }
.etl { font-weight: 600; font-size: 16.8px; letter-spacing: -0.2px; color: #fff; margin-right: 6px; }
.sparkle { position: relative; margin-left: 32px; margin-right: 22px; }
.reddot { position: absolute; right: -7px; top: -2px; width: 7px; height: 7px; border-radius: 50%; background: #d8354a; }
.avatar { width: 33px; height: 33px; border-radius: 50%; background: #434a93; color: #fff; font-weight: 600; font-size: 15.5px; line-height: 33px; text-align: center; }

/* Sidebar */
.app { height: 881px; flex: none; display: flex; background: #11171d; }
.side { width: 271px; overflow: hidden; background: #20272e; border-right: 1px solid #34434f; padding-top: 11px; font-weight: 600; font-size: 17px; letter-spacing: -0.37px; }
.new { height: 54px; width: 243px; margin: 0 0 11px 14px; padding-left: 15px; border: 1px solid #4b2a2f; border-radius: 27px; background: #322a2f; display: flex; align-items: center; gap: 12px; }
.group { margin-bottom: 21px; }
.group li { height: 39px; padding-left: 30px; display: flex; align-items: center; gap: 11px; white-space: nowrap; }
.group.main { margin-bottom: 20px; }
.group.main li { height: 40.5px; }
.group svg { width: 21px; height: 21px; fill: none; stroke: #8396a5; stroke-width: 1.7; }
.group svg .fill { fill: #8396a5; stroke: none; }
.group li.label { height: 40px; font-weight: 400; font-size: 15.5px; letter-spacing: -0.3px; color: #92a4b3; }

/* Content */
.content { flex: 1; display: flex; flex-direction: column; }
.topline { height: 81px; flex: none; display: flex; justify-content: space-between; padding: 30px 5px 0 20.5px; white-space: nowrap; }
.crumbs { line-height: 32px; font-size: 17.8px; color: #fff; }
.crumbs .slash { color: #b0b0b0; margin: 0 5px; }
.crumbs a:first-child { letter-spacing: -0.1px; }
.crumbs a:last-child { letter-spacing: 0.04px; }
.trial { line-height: 24px; font-size: 16.7px; letter-spacing: -0.15px; font-weight: 600; color: #030506; }
.trial b { color: #ff3d1f; font-weight: 700; }
.trial a { color: #2272c8; }
.scroll { flex: 1; display: flex; justify-content: space-between; }
.form { width: 692px; padding: 19px 0 0 26px; color: #949494; letter-spacing: -0.32px; }
.titlerow { height: 39px; display: flex; align-items: center; }
h1 { margin: 0; font-weight: 400; font-size: 33.2px; letter-spacing: 0; color: #e8ecf0; line-height: 30px; padding-bottom: 7px; white-space: nowrap; }
.vbar { width: 3px; height: 35px; margin-left: 25px; margin-right: 24px; background: #d8dcdf; margin-bottom: 2px; }
.btn { width: 85px; height: 39px; border-radius: 5px; border: 1px solid #777; font-size: 17px; letter-spacing: -0.32px; padding: 3px 0 0; line-height: 30px; color: #fff; background: #434343; }
.btn.create { margin-left: 14px; background: #000; border-color: #555; color: #8a8a8a; }
.desc { margin: 27px 0 0; width: 662px; line-height: 26px; font-size: 17.86px; letter-spacing: 0; color: #05080a; }
.desc a { color: #2aa4e6; letter-spacing: -0.28px; }
label { display: flex; align-items: center; font-size: 17px; }
.help { width: 16px; height: 16px; margin-left: 5px; }
.l1 { height: 26px; margin: 41px 0 7px; letter-spacing: -0.22px; }
.l2 { height: 29px; margin-bottom: 5px; }
.l3 { height: 26px; margin-bottom: 7px; letter-spacing: -0.2px; }
.l4 { height: 28px; margin-bottom: 5px; }
.form input { display: block; width: 666px; height: 40px; border: 1px solid #ccc; border-radius: 5px; background: #fff; padding: 0 8px 0; font-size: 17px; letter-spacing: -0.45px; color: #333; box-shadow: inset 0 1px 2px rgba(0,0,0,.12); }
.form input.res { padding-top: 2px; }
.form input::placeholder { color: #757575; }
.select { width: 297px; height: 35px; border: 1px solid #ccc; border-radius: 5px; background: #fff; padding: 4px 7px 0 13px; display: flex; align-items: center; justify-content: space-between; color: #5c5c5c; }
.select svg { margin-bottom: 5px; }
h2 { margin: 0; height: 60px; display: flex; align-items: center; font-weight: 400; font-size: 22.95px; letter-spacing: 0; color: #e8ecf0; }
h2 .help { margin: 4px 0 0 7px; }

/* Scrollbar */
.sbar { width: 23px; background: #424242; padding-left: 2px; display: flex; flex-direction: column; }
.sbtn { height: 25px; display: flex; align-items: center; justify-content: center; padding-top: 1px; padding-right: 1px; }
.sbtn.down { height: 37px; padding-top: 12px; }
.thumb { flex: 1; background: #6a6a6a; }

/* Taskbar */
.taskbar { height: 55px; flex: none; overflow: hidden; display: flex; border-top: 2px solid #434343; background: linear-gradient(90deg, #202121 0 480px, #2c1f18 640px, #2f1f15 1000px, #301e13 1380px, #202020 1440px); color: #fff; }
.weather { position: relative; width: 275px; padding: 22px 0 0 29px; }
.temp { position: absolute; left: 42px; top: 9px; width: 36px; height: 24px; border-radius: 12px; background: #2f2f2f; font-size: 15.5px; line-height: 23px; text-align: center; }
.apps { display: flex; }
.apps > div { position: relative; width: 66px; padding: 16px 15px 0; }
.apps svg { width: 36px; height: 36px; }
.apps .cur::before { content: ""; position: absolute; left: 4px; top: 4px; width: 53px; height: 60px; border: 1px solid #53463e; border-radius: 6px; background: #43352c; }
.apps .cur::after { content: ""; position: absolute; left: 52px; top: 4px; width: 12px; height: 60px; border: solid #53463e; border-width: 1px 1px 0 0; border-radius: 0 6px 0 0; background: linear-gradient(90deg, transparent 5px, #3b2d25 5px); }
.apps .cur svg { position: relative; z-index: 1; }
.glyph { font: 700 17px "Open Sans", sans-serif; fill: #fff; text-anchor: middle; }
.badge { position: absolute; left: 36px; top: 9px; width: 24px; height: 24px; border-radius: 50%; background: #d9a0e2; color: #201520; font-size: 17px; line-height: 24px; text-align: center; }
.tray { margin-left: auto; display: flex; padding-right: 28px; }
.slot { width: 48px; height: 68px; display: flex; align-items: center; justify-content: center; }
.lang { width: 66px; text-align: center; font-size: 16.5px; line-height: 22px; padding-top: 12px; }
.status { height: 68px; display: flex; align-items: center; gap: 11.5px; padding-left: 12px; }
.clock { width: 117px; text-align: right; line-height: 23px; padding-top: 10px; font-size: 17.5px; letter-spacing: -0.05px; white-space: nowrap; }
.bell { margin: 22px 0 0 13px; }
```
